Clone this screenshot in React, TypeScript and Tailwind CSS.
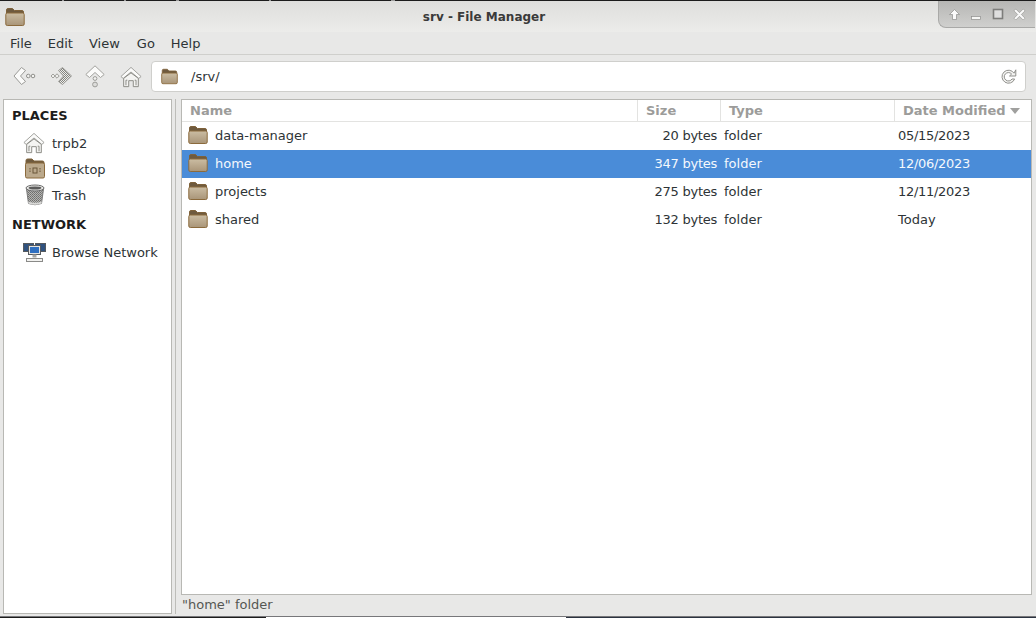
import React from "react";

const Folder = ({ s = 20 }: { s?: number }) => (
  <svg width={s} height={s} viewBox="0 0 20 20" className="shrink-0">
    <defs>
      <linearGradient id="fg" x1="0" y1="0" x2="0" y2="1">
        <stop offset="0" stopColor="#cbbda3" />
        <stop offset="1" stopColor="#a99578" />
      </linearGradient>
    </defs>
    <path d="M1.5 3Q1.5 1.5 3 1.5H7.5L9.5 3.5H17Q18.5 3.5 18.5 5V9H1.5Z" fill="#6e5a3e" stroke="#7f623a" />
    <path d="M0.8 7.5Q0.8 6 2.3 6H17.7Q19.2 6 19.2 7.5V17Q19.2 18.5 17.7 18.5H2.3Q0.8 18.5 0.8 17Z" fill="url(#fg)" stroke="#8b6a3c" />
  </svg>
);

const Home = ({ s = 24 }: { s?: number }) => (
  <svg width={s} height={s} viewBox="0 0 24 24" className="shrink-0">
    <path d="M1 11.5L12 1.5L23 11.5L20.5 13.5L12 6.5L3.5 13.5Z" fill="#fbfbfa" stroke="#9a9a96" strokeLinejoin="round" />
    <path d="M4 13.5L12 7.5L20 13.5V22.5H14.5V16H9.5V22.5H4Z" fill="#f4f4f2" stroke="#85857f" strokeLinejoin="round" />
    <path d="M6.5 21V15.5H8M17.5 21V15.5H16" fill="none" stroke="#85857f" />
  </svg>
);

const Back = () => (
  <svg width="24" height="20" viewBox="0 0 24 20" className="shrink-0">
    <path d="M9.5 0.5L2 9L9.5 17.5L13.5 14.5L8.5 9L13.5 3.5Z" fill="#fbfbfa" stroke="#9a9a96" strokeLinejoin="round" />
    <circle cx="16.3" cy="9" r="1.8" fill="#f2f2f0" stroke="#8f8f8b" />
    <circle cx="21" cy="9" r="1.8" fill="#f2f2f0" stroke="#8f8f8b" />
  </svg>
);

const Forward = () => (
  <svg width="24" height="20" viewBox="0 0 24 20" className="shrink-0">
    <defs>
      <pattern id="dots" width="2" height="2" patternUnits="userSpaceOnUse">
        <rect width="2" height="2" fill="#ecece9" />
        <rect width="1" height="1" fill="#84847f" />
        <rect x="1" y="1" width="1" height="1" fill="#84847f" />
      </pattern>
    </defs>
    <path d="M13.5 0.5L22.5 9L13.5 17.5L9.5 14.5L14.5 9L9.5 3.5Z" fill="url(#dots)" stroke="#9c9c98" strokeLinejoin="round" />
    <path d="M8 6.8L10.2 9L8 11.2L5.8 9Z" fill="#eeeeec" stroke="#9c9c98" />
    <path d="M4 7L6 9L4 11L2 9Z" fill="#eeeeec" stroke="#a2a29e" />
  </svg>
);

const Up = () => (
  <svg width="20" height="24" viewBox="0 0 20 24" className="shrink-0">
    <path d="M0.8 9.5L10 0.8L19.2 9.5L15.5 12.5L10 7.5L4.5 12.5Z" fill="#fbfbfa" stroke="#a2a29e" strokeLinejoin="round" />
    <circle cx="10" cy="13.5" r="1.9" fill="#f2f2f0" stroke="#9c9c98" />
    <circle cx="10" cy="19.5" r="2.4" fill="#dcdcda" stroke="#9c9c98" />
  </svg>
);

const Reload = () => (
  <svg width="17" height="17" viewBox="0 0 17 17" className="shrink-0">
    <path d="M14 5.2A6.5 6.5 0 1 0 14.6 11H12A4.2 4.2 0 1 1 11.6 6L9.5 8H15.8V1.8Z" fill="#f4f4f2" stroke="#8f8f8b" strokeLinejoin="round" />
  </svg>
);

const DesktopIcon = () => (
  <svg width="22" height="22" viewBox="0 0 22 22" className="shrink-0">
    <path d="M2 2.5Q2 1 3.5 1H8L10 3H18.5Q20 3 20 4.5V9H2Z" fill="#6e5a3e" stroke="#7f623a" />
    <path d="M1.5 6.5Q1.5 5 3 5H19Q20.5 5 20.5 6.5V18.5Q20.5 20 19 20H3Q1.5 20 1.5 18.5Z" fill="#bba98c" stroke="#8b6a3c" />
    <rect x="9" y="10" width="4" height="5" fill="none" stroke="#6a5739" strokeWidth="1" />
    <path d="M6 10V15M16 10V15" stroke="#6a5739" strokeDasharray="1.5 1" />
  </svg>
);

const TrashIcon = () => (
  <svg width="22" height="22" viewBox="0 0 22 22" className="shrink-0">
    <defs>
      <pattern id="mesh" width="2" height="2" patternUnits="userSpaceOnUse">
        <rect width="2" height="2" fill="#b4b4b2" />
        <rect width="1" height="1" fill="#6e6e6c" />
        <rect x="1" y="1" width="1" height="1" fill="#7c7c7a" />
      </pattern>
    </defs>
    <path d="M2.5 5L4.5 19.5Q11 22 17.5 19.5L19.5 5Z" fill="url(#mesh)" stroke="#7a7a7a" />
    <path d="M4.5 19.5Q11 22 17.5 19.5L17.8 17.5Q11 20 4.2 17.5Z" fill="#d8d8d6" />
    <ellipse cx="11" cy="4" rx="9" ry="3" fill="#e8e8e6" stroke="#6a6a6a" />
    <ellipse cx="11" cy="4" rx="6.5" ry="1.6" fill="#5b5b5b" />
  </svg>
);

const NetworkIcon = () => (
  <svg width="23" height="21" viewBox="0 0 23 21" className="shrink-0">
    <rect x="0.5" y="1.5" width="10" height="8" fill="#30527f" stroke="#55595e" />
    <rect x="12.5" y="1.5" width="10" height="8" fill="#30527f" stroke="#55595e" />
    <rect x="5.5" y="3.5" width="12" height="9" fill="#e4e4e2" stroke="#55595e" />
    <rect x="7" y="5" width="9" height="6" fill="#2f6fc0" />
    <rect x="9.5" y="12.5" width="4" height="3" fill="#a5a5a3" />
    <rect x="3.5" y="16.5" width="16" height="3" fill="#f2f2f0" stroke="#8a8a88" />
  </svg>
);

const SortArrow = () => (
  <svg width="10" height="6" viewBox="0 0 10 6" className="shrink-0">
    <path d="M0 0H10L5 6Z" fill="#a0a09e" />
  </svg>
);

const rows = [
  { name: "data-manager", size: "20 bytes", date: "05/15/2023", sel: false, today: false },
  { name: "home", size: "347 bytes", date: "12/06/2023", sel: true, today: false },
  { name: "projects", size: "275 bytes", date: "12/11/2023", sel: false, today: false },
  { name: "shared", size: "132 bytes", date: "Today", sel: false, today: true },
];

const Place = ({ icon, label }: { icon: React.ReactNode; label: string }) => (
  <div className="flex h-[26px] items-center pl-[19px]">
    <div className="flex w-[29px] shrink-0 justify-start">{icon}</div>
    <span className="text-[13px] text-[#2e3436]">{label}</span>
  </div>
);

export default function App() {
  return (
    <div className="flex h-[618px] w-[1036px] flex-col overflow-hidden bg-[#e8e8e7] font-['DejaVu_Sans',sans-serif] text-[13px] leading-none text-[#2e3436]">
      <div className="flex h-[1px] shrink-0 bg-[#1c1c1c]">
        <div className="ml-[62px] w-[2px] bg-[#9a9a9a]" />
        <div className="ml-[60px] w-[2px] bg-[#9a9a9a]" />
        <div className="ml-[50px] w-[3px] bg-[#9a9a9a]" />
        <div className="ml-[90px] w-[2px] bg-[#9a9a9a]" />
        <div className="ml-[120px] w-[4px] bg-[#9a9a9a]" />
      </div>
      <div className="relative flex h-[31px] shrink-0 items-center bg-gradient-to-b from-[#dededc] to-[#ececea] pl-[5px]">
        <Folder s={20} />
        <div className="flex-1 pr-[93px] text-center text-[12px] font-bold text-[#3a3a3a]">srv - File Manager</div>
        <div className="absolute right-[1px] top-0 flex h-[27px] w-[97px] items-center justify-between rounded-bl-[8px] border-b border-l border-[#a9a9a7] bg-gradient-to-b from-[#b6b6b4] to-[#d0d0ce] pl-[9px] pr-[9px]">
          <svg width="13" height="13" viewBox="0 0 13 13"><path d="M6.5 1.5L11.5 6.5H8.5V11.5H4.5V6.5H1.5Z" fill="#fafafa" stroke="#8e8e8c" strokeWidth="0.7" /></svg>
          <svg width="12" height="13" viewBox="0 0 12 13"><rect x="1.5" y="8.5" width="9" height="3" fill="#f7f7f5" stroke="#8e8e8c" strokeWidth="0.7" /></svg>
          <svg width="12" height="13" viewBox="0 0 12 13"><rect x="1.5" y="1.5" width="9" height="9" fill="#dedede" stroke="#7d7d7b" strokeWidth="1.6" /></svg>
          <svg width="13" height="13" viewBox="0 0 13 13"><path d="M1 2.8L2.8 1L6.5 4.7L10.2 1L12 2.8L8.3 6.5L12 10.2L10.2 12L6.5 8.3L2.8 12L1 10.2L4.7 6.5Z" fill="#fafafa" stroke="#8e8e8c" strokeWidth="0.6" /></svg>
        </div>
      </div>
      <div className="flex h-[23px] shrink-0 items-center gap-[16px] border-b border-[#cfcfcc] pl-[10px] pr-[3px] text-[13px] text-[#2e3436]">
        <span>File</span>
        <span>Edit</span>
        <span>View</span>
        <span className="ml-[1px]">Go</span>
        <span>Help</span>
      </div>
      <div className="flex h-[44px] shrink-0 items-center pl-[12px] pr-[10px]">
        <div className="flex w-[139px] items-center">
          <div className="w-[36px]"><Back /></div>
          <div className="w-[37px] pl-[1px]"><Forward /></div>
          <div className="w-[35px]"><Up /></div>
          <Home s={22} />
        </div>
        <div className="mb-[1px] flex h-[31px] flex-1 items-center rounded-[4px] border border-[#cfcfcc] bg-white pl-[9px] pr-[8px]">
          <Folder s={17} />
          <span className="ml-[13px] flex-1 text-[13px] text-[#2e3436]">/srv/</span>
          <Reload />
        </div>
      </div>
      <div className="flex min-h-0 flex-1 pb-[2px] pl-[3px] pr-[4px]">
        <div className="w-[169px] shrink-0 border border-[#b8b8b4] bg-white">
          <div className="flex h-[30px] items-center pl-[8px] text-[13px] font-bold text-[#1c1c1c]">PLACES</div>
          <Place icon={<Home s={22} />} label="trpb2" />
          <Place icon={<div className="pl-[1px]"><DesktopIcon /></div>} label="Desktop" />
          <Place icon={<div className="pl-[1px]"><TrashIcon /></div>} label="Trash" />
          <div className="flex h-[31px] items-center pl-[8px] pt-[2px] text-[13px] font-bold text-[#1c1c1c]">NETWORK</div>
          <Place icon={<NetworkIcon />} label="Browse Network" />
        </div>
        <div className="mx-[3px] w-[2px] shrink-0 border-l border-[#bdbdb9]" />
        <div className="flex min-w-0 flex-1 flex-col pl-[1px]">
          <div className="min-h-0 flex-1 border border-[#b8b8b4] bg-white">
            <div className="flex h-[22px] items-center border-b border-[#e3e3e1] text-[13px] font-bold text-[#9c9c9a]">
              <div className="flex h-full w-[456px] items-center border-r border-[#e3e3e1] pl-[8px]">Name</div>
              <div className="flex h-full w-[83px] items-center border-r border-[#e3e3e1] pl-[8px]">Size</div>
              <div className="flex h-full w-[174px] items-center border-r border-[#e3e3e1] pl-[8px]">Type</div>
              <div className="flex h-full flex-1 items-center gap-[4px] pl-[8px]">Date Modified <SortArrow /></div>
            </div>
            <div>
              {rows.map((r) => (
                <div key={r.name} className={`flex h-[28px] items-center pb-[2px] text-[13px] ${r.sel ? "bg-[#4a8cd8] text-[#f4f8fd]" : "text-[#2e3436]"}`}>
                  <div className="flex w-[456px] items-center pl-[6px]">
                    <Folder s={20} />
                    <span className="ml-[7px]">{r.name}</span>
                  </div>
                  <div className="w-[79px] text-right tracking-[-0.25px]">{r.size}</div>
                  <div className="w-[174px] pl-[7px]">folder</div>
                  <div className={r.today ? "pl-[7px]" : "pl-[7px] tracking-[-0.3px]"}>{r.date}</div>
                </div>
              ))}
            </div>
          </div>
          <div className="flex h-[19px] shrink-0 items-center pl-[1px] text-[13px] text-[#555753]">"home" folder</div>
        </div>
      </div>
      <div className="h-[1px] shrink-0 bg-[#77777a]" />
      <div className="flex h-[1px] shrink-0">
        <div className="w-[266px] bg-[#1c1c1c]" />
        <div className="w-[300px] bg-white" />
        <div className="flex-1 bg-[#2b3340]" />
      </div>
    </div>
  );
}
